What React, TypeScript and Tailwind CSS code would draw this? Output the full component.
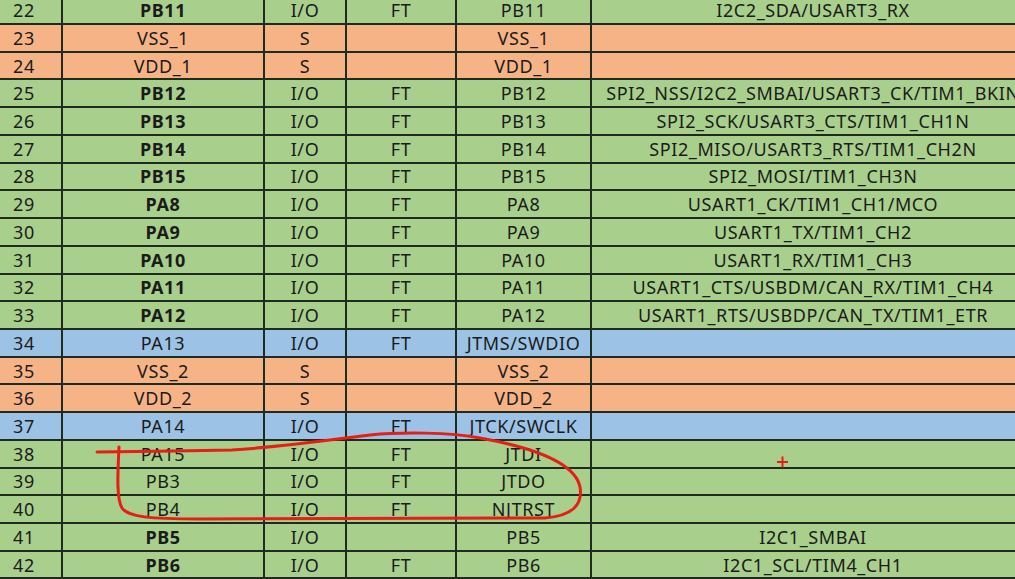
import React from 'react'

type Kind = 'io' | 'pwr' | 'dbg'

interface Pin {
  no: number
  name: string
  bold?: boolean
  type: string
  ft: string
  main: string
  alt: string
  kind: Kind
}

const pins: Pin[] = [
  { no: 22, name: 'PB11', bold: true, type: 'I/O', ft: 'FT', main: 'PB11', alt: 'I2C2_SDA/USART3_RX', kind: 'io' },
  { no: 23, name: 'VSS_1', type: 'S', ft: '', main: 'VSS_1', alt: '', kind: 'pwr' },
  { no: 24, name: 'VDD_1', type: 'S', ft: '', main: 'VDD_1', alt: '', kind: 'pwr' },
  { no: 25, name: 'PB12', bold: true, type: 'I/O', ft: 'FT', main: 'PB12', alt: 'SPI2_NSS/I2C2_SMBAI/USART3_CK/TIM1_BKIN', kind: 'io' },
  { no: 26, name: 'PB13', bold: true, type: 'I/O', ft: 'FT', main: 'PB13', alt: 'SPI2_SCK/USART3_CTS/TIM1_CH1N', kind: 'io' },
  { no: 27, name: 'PB14', bold: true, type: 'I/O', ft: 'FT', main: 'PB14', alt: 'SPI2_MISO/USART3_RTS/TIM1_CH2N', kind: 'io' },
  { no: 28, name: 'PB15', bold: true, type: 'I/O', ft: 'FT', main: 'PB15', alt: 'SPI2_MOSI/TIM1_CH3N', kind: 'io' },
  { no: 29, name: 'PA8', bold: true, type: 'I/O', ft: 'FT', main: 'PA8', alt: 'USART1_CK/TIM1_CH1/MCO', kind: 'io' },
  { no: 30, name: 'PA9', bold: true, type: 'I/O', ft: 'FT', main: 'PA9', alt: 'USART1_TX/TIM1_CH2', kind: 'io' },
  { no: 31, name: 'PA10', bold: true, type: 'I/O', ft: 'FT', main: 'PA10', alt: 'USART1_RX/TIM1_CH3', kind: 'io' },
  { no: 32, name: 'PA11', bold: true, type: 'I/O', ft: 'FT', main: 'PA11', alt: 'USART1_CTS/USBDM/CAN_RX/TIM1_CH4', kind: 'io' },
  { no: 33, name: 'PA12', bold: true, type: 'I/O', ft: 'FT', main: 'PA12', alt: 'USART1_RTS/USBDP/CAN_TX/TIM1_ETR', kind: 'io' },
  { no: 34, name: 'PA13', type: 'I/O', ft: 'FT', main: 'JTMS/SWDIO', alt: '', kind: 'dbg' },
  { no: 35, name: 'VSS_2', type: 'S', ft: '', main: 'VSS_2', alt: '', kind: 'pwr' },
  { no: 36, name: 'VDD_2', type: 'S', ft: '', main: 'VDD_2', alt: '', kind: 'pwr' },
  { no: 37, name: 'PA14', type: 'I/O', ft: 'FT', main: 'JTCK/SWCLK', alt: '', kind: 'dbg' },
  { no: 38, name: 'PA15', type: 'I/O', ft: 'FT', main: 'JTDI', alt: '', kind: 'io' },
  { no: 39, name: 'PB3', type: 'I/O', ft: 'FT', main: 'JTDO', alt: '', kind: 'io' },
  { no: 40, name: 'PB4', type: 'I/O', ft: 'FT', main: 'NJTRST', alt: '', kind: 'io' },
  { no: 41, name: 'PB5', bold: true, type: 'I/O', ft: '', main: 'PB5', alt: 'I2C1_SMBAI', kind: 'io' },
  { no: 42, name: 'PB6', bold: true, type: 'I/O', ft: 'FT', main: 'PB6', alt: 'I2C1_SCL/TIM4_CH1', kind: 'io' },
]

const rowBg: Record<Kind, string> = {
  io:  'bg-[#a9cf8c]',
  pwr: 'bg-[#f6b486]',
  dbg: 'bg-[#9cc3e6]',
}

const cell = 'flex items-center justify-center border-r-2 border-[#1f2b1f] h-full'

function PinRow({ p }: { p: Pin }) {
  return (
    <div className={`grid grid-cols-[63px_202px_82px_110px_135px_442px] h-[27.72px] border-b-2 border-[#1f2b1f] ${rowBg[p.kind]}`}>
      <div className={`${cell} !justify-start pl-[13px]`}>{p.no}</div>
      <div className={`${cell} ${p.bold ? 'font-bold' : ''}`}>{p.name}</div>
      <div className={cell}>{p.type}</div>
      <div className={cell}>{p.ft}</div>
      <div className={cell}>{p.main}</div>
      <div className="flex items-center justify-center h-full whitespace-nowrap">{p.alt}</div>
    </div>
  )
}

export default function App() {
  return (
    <div className="relative w-[1015px] h-[579px] overflow-hidden bg-[#a9cf8c] text-[18px] tracking-[0.6px] leading-none text-[#1b1b1b] font-['Noto_Sans',sans-serif]">
      <div className="-mt-[2.7px] w-[1034px]">
        {pins.map(p => <PinRow key={p.no} p={p} />)}
      </div>

      {/* red pen annotation drawn over the table */}
      <svg className="absolute inset-0 pointer-events-none" width="1015" height="579" viewBox="0 0 1015 579" fill="none">
        <path
          d="M97 452 L175 451 L232 450 C280 447 330 440 370 435 C400 432 450 432 480 438 C530 447 575 462 580 487 C583 505 572 516 545 518 L200 519 C150 519 128 517 122 508 C116 498 118 470 119 447"
          stroke="#e61e14" strokeWidth="3" strokeLinecap="round" strokeLinejoin="round"
        />
        <path d="M777 462 H788 M782.5 456.5 V467.5" stroke="#e61e14" strokeWidth="2" />
      </svg>
    </div>
  )
}
